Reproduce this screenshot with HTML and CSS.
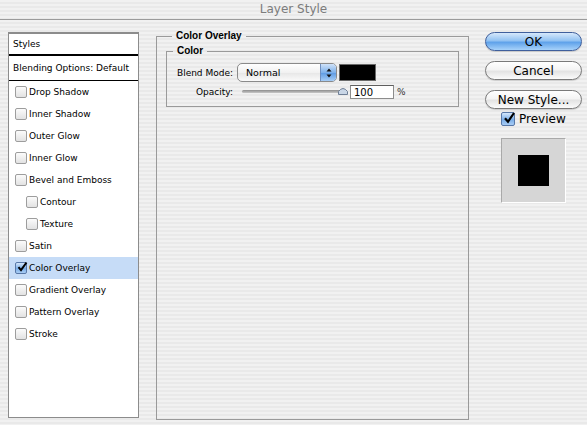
FILE: index.html
```html
<!DOCTYPE html>
<html lang="en">
<head>
    <meta charset="UTF-8">
    <title>Layer Style</title>
    <link rel="stylesheet" href="styles.css">
</head>
<body>

    <div class="titlebar">Layer Style</div>

    <div class="dialog">
        <!-- Left: effects list -->
        <div class="styles-list">
            <div class="list-head">Styles</div>
            <div class="list-blend">Blending Options: Default</div>
            <div class="list-item"><span class="check"></span>Drop Shadow</div>
            <div class="list-item"><span class="check"></span>Inner Shadow</div>
            <div class="list-item"><span class="check"></span>Outer Glow</div>
            <div class="list-item"><span class="check"></span>Inner Glow</div>
            <div class="list-item"><span class="check"></span>Bevel and Emboss</div>
            <div class="list-item sub"><span class="check"></span>Contour</div>
            <div class="list-item sub"><span class="check"></span>Texture</div>
            <div class="list-item"><span class="check"></span>Satin</div>
            <div class="list-item selected"><span class="check on"><svg viewBox="0 0 12 12" width="12" height="12"><path d="M2.5 6.2 L5 9.2 L10.5 1.5" fill="none" stroke="#000" stroke-width="2"/></svg></span>Color Overlay</div>
            <div class="list-item"><span class="check"></span>Gradient Overlay</div>
            <div class="list-item"><span class="check"></span>Pattern Overlay</div>
            <div class="list-item"><span class="check"></span>Stroke</div>
        </div>

        <!-- Middle: settings for the selected effect -->
        <fieldset class="group outer">
            <legend>Color Overlay</legend>
            <fieldset class="group inner">
                <legend>Color</legend>
                <div class="row blend-row">
                    <span class="label">Blend Mode:</span>
                    <div class="select">
                        <span class="select-value">Normal</span>
                        <span class="stepper">
                            <svg viewBox="0 0 8 12" width="8" height="12"><path d="M4 1.5 L6.5 4.5 L1.5 4.5 Z M4 10.5 L6.5 7.5 L1.5 7.5 Z" fill="#111"/></svg>
                        </span>
                    </div>
                    <span class="swatch"></span>
                </div>
                <div class="row opacity-row">
                    <span class="label">Opacity:</span>
                    <div class="slider">
                        <span class="track"></span>
                        <svg class="thumb" viewBox="0 0 10 8" width="10" height="8"><path d="M0.5 7.5 L0.5 4.5 Q5 -1.5 9.5 4.5 L9.5 7.5 Z" fill="#c9d6e6" stroke="#6f7f96"/></svg>
                    </div>
                    <span class="num-input">100</span>
                    <span class="unit">%</span>
                </div>
            </fieldset>
        </fieldset>

        <!-- Right: buttons and preview -->
        <div class="side">
            <button class="aqua-btn default">OK</button>
            <button class="aqua-btn">Cancel</button>
            <button class="aqua-btn">New Style...</button>
            <label class="preview-toggle">
                <span class="check big on"><svg viewBox="0 0 14 14" width="14" height="14"><path d="M3 7.2 L6 10.8 L12 2" fill="none" stroke="#000" stroke-width="2.2"/></svg></span>
                Preview
            </label>
            <div class="preview-box"><span class="preview-swatch"></span></div>
        </div>
    </div>

</body>
</html>
```

FILE: styles.css
```css
/* --- Base --- */
* {
    margin: 0;
    padding: 0;
    box-sizing: border-box;
}

body {
    width: 587px;
    height: 425px;
    overflow: hidden;
    font-family: 'DejaVu Sans', 'Liberation Sans', sans-serif;
    font-size: 9px;
    color: #000;
    background: repeating-linear-gradient(to bottom, #f1f1f1 0, #f1f1f1 2px, #e9e9e9 2px, #e9e9e9 4px);
}

/* --- Window title --- */
.titlebar {
    height: 20px;
    line-height: 19px;
    text-align: center;
    font-size: 12px;
    color: #7c7c7c;
    border-bottom: 1px solid #9b9b9b;
}

.dialog {
    display: flex;
    align-items: flex-start;
    padding: 10px 0 0 8px;
}

/* --- Styles list --- */
.styles-list {
    width: 131px;
    height: 386px;
    margin-top: 2px;
    background: #fff;
    border: 1px solid #8c8c8c;
    border-top-width: 2px;
}

.list-head {
    height: 22px;
    line-height: 21px;
    padding-left: 4px;
    border-bottom: 2px solid #000;
}

.list-blend {
    height: 25px;
    line-height: 24px;
    padding-left: 4px;
    border-bottom: 1px solid #000;
}

.list-item {
    height: 22px;
    display: flex;
    align-items: center;
    gap: 2px;
    padding-left: 6px;
}

.list-item.sub { padding-left: 17px; }
.list-item.selected { background: #c6dcf7; }

/* aqua checkbox */
.check {
    width: 12px;
    height: 12px;
    border: 1px solid #9d9d9d;
    border-radius: 2px;
    background: linear-gradient(#fbfbfb, #e2e2e2);
    display: flex;
    align-items: center;
    justify-content: center;
    flex-shrink: 0;
}

.check.on {
    border-color: #5878a8;
    background: linear-gradient(#d4e6fb, #7aaee8 55%, #a9cdf5);
}

.check.on svg { margin-top: -2px; margin-right: -2px; }

.check.big {
    width: 14px;
    height: 14px;
}

/* --- Group boxes --- */
.group {
    border: 1px solid #9a9a9a;
    min-width: 0;
}

.group legend {
    font-family: 'Liberation Sans', sans-serif;
    font-weight: bold;
    font-size: 10px;
    line-height: 12px;
    padding: 0 4px;
    margin-left: 6px;
}

.outer {
    width: 313px;
    height: 390px;
    margin-left: 17px;
    padding: 3px 9px 0 9px;
}

.inner {
    height: 62px;
    padding: 0;
}

.row {
    display: flex;
    align-items: center;
}

.label {
    width: 66px;
    text-align: right;
    margin-right: 4px;
}

.blend-row {
    height: 19px;
    margin-top: 6px;
}

.opacity-row {
    height: 15px;
    margin-top: 2px;
}

/* popup menu */
.select {
    width: 100px;
    height: 19px;
    display: flex;
    border: 1px solid #8a8a8a;
    border-radius: 5px;
    background: linear-gradient(#ffffff, #f1f1f1 50%, #e6e6e6 51%, #fafafa);
    overflow: hidden;
}

.select-value {
    flex: 1;
    padding-left: 8px;
    line-height: 17px;
    font-size: 9.5px;
}

.stepper {
    width: 16px;
    display: flex;
    align-items: center;
    justify-content: center;
    border-left: 1px solid #6f8fbf;
    background: linear-gradient(#cfe2f9, #7fb1ea 50%, #5c99e2 51%, #a6cdf6);
}

.swatch {
    width: 37px;
    height: 17px;
    margin-left: 2px;
    background: #000;
    border: 1px solid #6a6a6a;
}

/* slider */
.slider {
    width: 109px;
    height: 15px;
    margin-left: 5px;
    display: flex;
    align-items: center;
    position: relative;
}

.track {
    width: 100px;
    height: 3px;
    border-radius: 2px;
    background: linear-gradient(#8c8c8c, #c8c8c8);
}

.slider .thumb {
    position: absolute;
    left: 96px;
    top: 3px;
}

.num-input {
    width: 44px;
    height: 14px;
    margin-left: -1px;
    padding-left: 3px;
    line-height: 13px;
    font-size: 10px;
    background: #fff;
    border: 1px solid #8c8c8c;
    border-top-color: #5f5f5f;
}

.unit {
    margin-left: 3px;
    font-size: 9px;
    color: #333;
}

/* --- Right column --- */
.side {
    width: 98px;
    margin-left: 16px;
    margin-top: 2px;
    display: flex;
    flex-direction: column;
}

.aqua-btn {
    width: 97px;
    height: 19px;
    margin-bottom: 10px;
    font-family: 'DejaVu Sans', sans-serif;
    font-size: 12px;
    color: #000;
    border: 1px solid #7a7a7a;
    border-radius: 10px;
    background: linear-gradient(#ffffff, #f4f4f4 45%, #e3e3e3 55%, #fbfbfb);
    box-shadow: 0 1px 1px rgba(0, 0, 0, 0.15);
}

.aqua-btn.default {
    border-color: #3f5f9c;
    background: linear-gradient(#d6e8fb, #92c2f2 45%, #5fa2ea 55%, #a7d2fa);
}

.aqua-btn:nth-of-type(3) { margin-bottom: 3px; }

.preview-toggle {
    display: flex;
    align-items: center;
    gap: 4px;
    margin-left: 16px;
    height: 14px;
    font-size: 12px;
}

.preview-box {
    width: 65px;
    height: 65px;
    margin: 12px 0 0 16px;
    background: #d6d6d6;
    border: 1px solid #a9a9a9;
    border-right-color: #fff;
    border-bottom-color: #fff;
    display: flex;
    align-items: center;
    justify-content: center;
}

.preview-swatch {
    width: 31px;
    height: 31px;
    background: #000;
}
```
